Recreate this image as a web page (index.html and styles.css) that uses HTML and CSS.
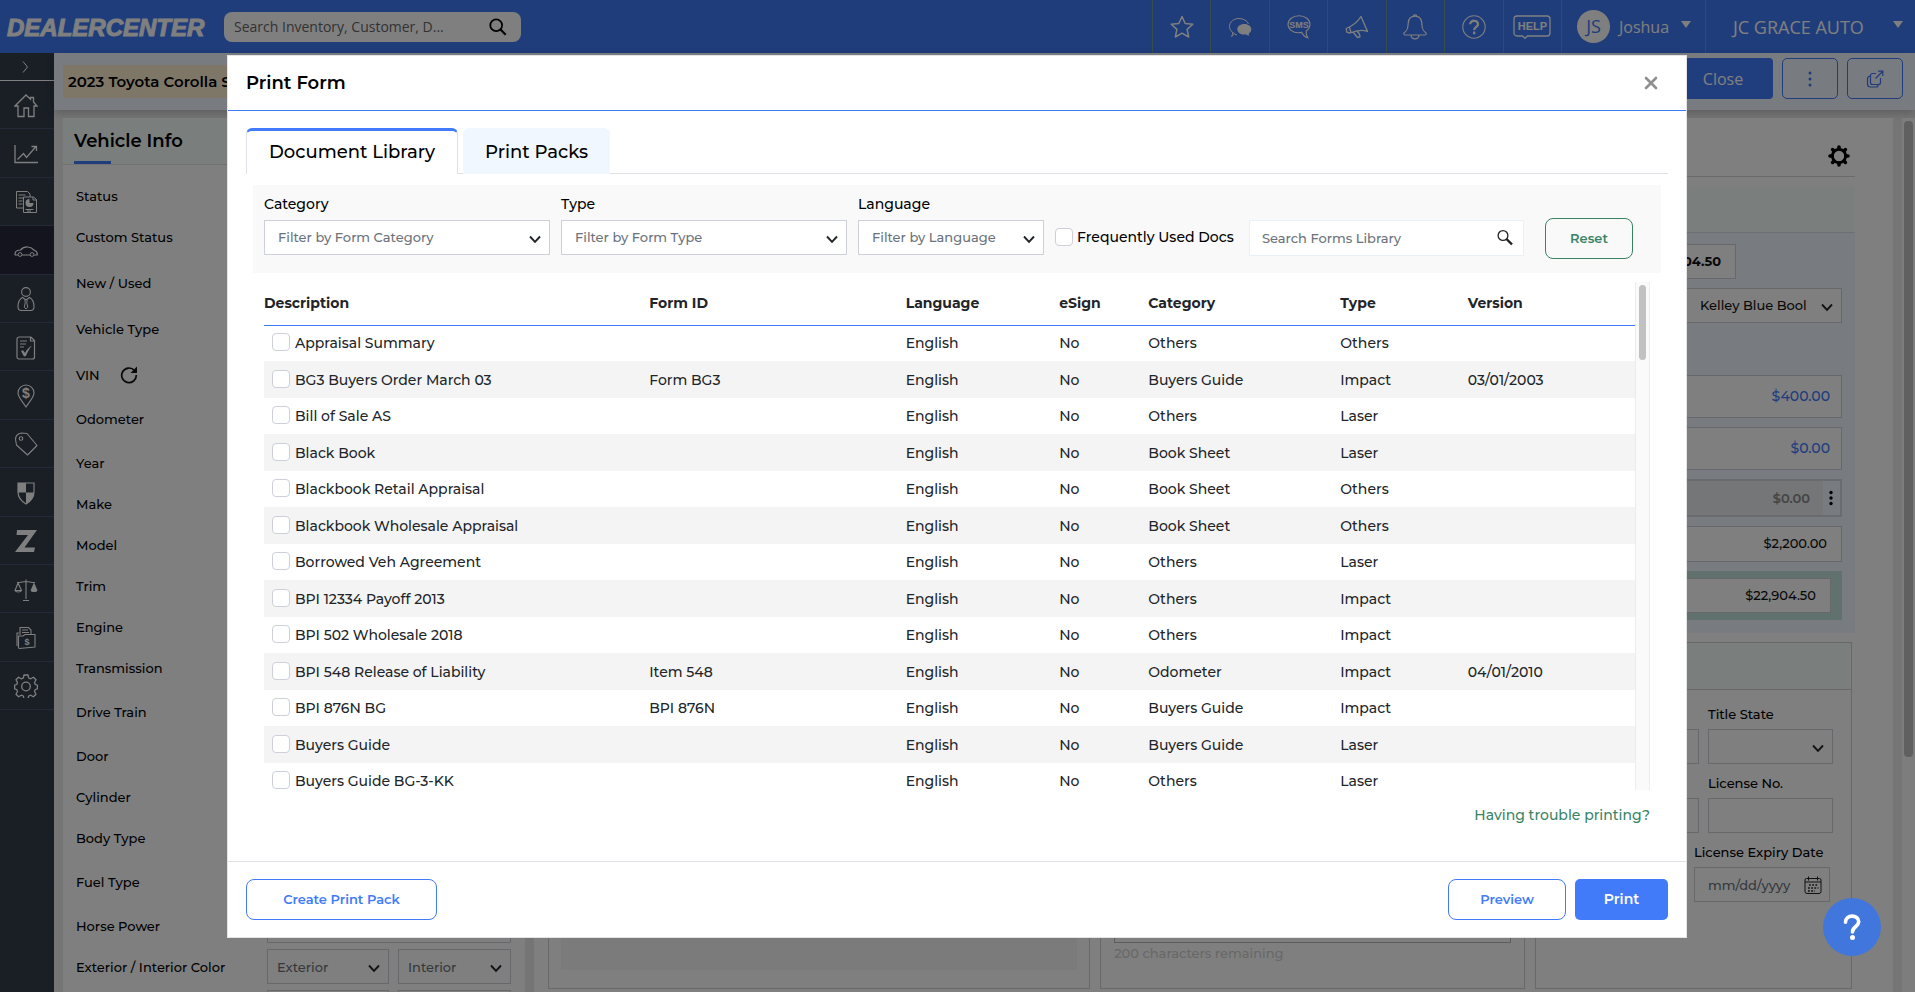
FILE: index.html
```html
<!DOCTYPE html>
<html lang="en">
<head>
<meta charset="utf-8">
<meta name="viewport" content="width=device-width, initial-scale=1">
<title>DealerCenter - Print Form</title>
<link rel="stylesheet" href="styles.css">
</head>
<body>
<svg class="sprite" aria-hidden="true">
  <symbol id="chevron" viewBox="0 0 14 14"><path d="M2 4.5 7 9.8l5-5.3" fill="none" stroke="currentColor" stroke-width="1.9"/></symbol>
</svg>

<div class="app">
  <header class="topbar">
    <div class="brand">DEALERCENTER</div>
    <div class="global-search">
      <input class="global-search-input" type="text" aria-label="Search" placeholder="Search Inventory, Customer, D...">
      <svg class="i18" viewBox="0 0 18 18"><circle cx="7.2" cy="7.2" r="5.9" fill="none" stroke="#000" stroke-width="1.8"/><path d="m11.5 11.5 5.2 5.2" stroke="#000" stroke-width="2.2"/></svg>
    </div>
    <nav class="top-actions" aria-label="Tools">
      <button class="top-action" aria-label="Favorites"><svg class="i24" viewBox="0 0 24 24"><path d="m12 1.5 3.2 7 7.6.8-5.700 5.100 1.600 7.600L12 18.200 5.300 22l1.600-7.600L1.200 9.300l7.600-.8z" fill="none" stroke="#fff" stroke-width="1.500" stroke-linejoin="round"/></svg></button>
      <button class="top-action" aria-label="Chat"><svg class="i24" viewBox="0 0 24 24"><path d="M6.500 18.500c-3-1.300-5-3.800-5-7C1.500 6.800 5.800 3.500 11 3.500c4.500 0 8.300 2.200 9.500 5.500M6.500 18.500C6 19.800 5 20.800 3.500 21.300c.8-.9 1.200-2.200 1.200-3.800M9 20l-2-.7" fill="none" stroke="#fff"/><path d="M16.300 9c-4 0-7 2.300-7 5.300s3 5.300 7 5.300c.8 0 1.500 0 2.200-.2.700.8 1.700 1.200 2.900 1.200-.5-.6-.7-1.300-.7-2.100 1.700-1 2.600-2.400 2.600-4.200 0-3-3-5.300-7-5.300z" fill="#fff"/></svg></button>
      <button class="top-action" aria-label="SMS"><svg class="i24" viewBox="0 0 24 24"><path d="M12 .8C5.800.8 1 4.500 1 9.300c0 4.800 4.500 8.500 10.500 8.500 1.300 0 2.200-.1 3.300-.4 1.400 3 3.500 4.700 6 5.400-1.500-2-2-4-1.600-6.800 2.400-1.700 3.800-3.800 3.800-6.700C23 4.500 18.200.8 12 .8z" fill="none" stroke="#fff" stroke-width="1.100"/><text x="12" y="12.500" class="glyph-sms">SMS</text></svg></button>
      <button class="top-action" aria-label="Announcements"><svg class="i24" viewBox="0 0 24 24"><path d="M16 1.500 22.500 16.500C17.500 14.500 12 15 5 18l-3.200-.8-.6-3.700C7.500 11 12.500 7 16 1.500zM8 17l4.500 5.500 2.500-.6-.6-2.900-2-2.500M4.500 12.500 6 17.500" fill="none" stroke="#fff" stroke-width="1.300" stroke-linejoin="round"/></svg></button>
      <button class="top-action" aria-label="Notifications"><svg class="i26" viewBox="0 0 26 26"><path d="M13 2.200c-4.500 0-6.500 3-6.800 7-.3 6-1.200 7.600-3.700 9.200-1.300 1-.9 2.600 1 2.600h19c1.900 0 2.300-1.600 1-2.600-2.500-1.600-3.400-3.200-3.700-9.200-.3-4-2.300-7-6.800-7zM11.200 2.400c0-2.200 3.600-2.200 3.600 0M9 21c.3 5.200 7.700 5.200 8 0" fill="none" stroke="#fff" stroke-width="1.200"/></svg></button>
      <button class="top-action" aria-label="Support"><svg class="i24" viewBox="0 0 24 24"><circle cx="12" cy="12" r="11.200" fill="none" stroke="#fff" stroke-width="1.100"/><path d="M8.200 9.300c0-4.800 7.800-4.600 7.800 0 0 2.600-3.800 2.500-3.800 5.600M12.200 16.600v2.600" fill="none" stroke="#fff" stroke-width="2.300"/></svg></button>
      <button class="top-action" aria-label="Help"><svg class="help-icon" viewBox="0 0 38 24"><path d="M4 1h30a3 3 0 0 1 3 3v14a3 3 0 0 1-3 3H14.500L12 23.300 9.500 21H4a3 3 0 0 1-3-3V4a3 3 0 0 1 3-3z" fill="none" stroke="#fff" stroke-width="1.300"/><text x="19.500" y="15" class="glyph-help">HELP</text></svg></button>
      <button class="user-menu"><span class="avatar">JS</span><span class="user-name">Joshua</span><span class="caret"></span></button>
      <button class="company-menu"><span>JC GRACE AUTO</span><span class="caret"></span></button>
    </nav>
  </header>

  <div class="shell">
    <nav class="sidebar" aria-label="Main">
      <button class="side-toggle" aria-label="Expand"><svg class="i12" viewBox="0 0 12 12"><path d="m4 .5 4.500 5.500L4 11.500" fill="none" stroke="#fff"/></svg></button>
      <div class="side-list">
        <a class="side-item" href="#" aria-label="Home"><svg class="i24" viewBox="0 0 24 24"><path d="M4 22.500V12H1L12 1l4.500 4.200V3.500h3V8l3.500 4h-3v10.500h-5.500V14H10v8.500z" fill="none" stroke="#fff" stroke-width="1.300"/></svg></a>
        <a class="side-item" href="#" aria-label="Analytics"><svg class="i24" viewBox="0 0 24 24"><path d="M1 3v17.500h23M3.500 17.500l6-6 3 4L22 4.500M17.500 4.500H22.500V9" fill="none" stroke="#fff" stroke-width="1.300"/></svg></a>
        <a class="side-item" href="#" aria-label="Reports"><svg class="i24" viewBox="0 0 24 24"><path d="M9 18H2.500V1.500h11L16 4v3M9.500 7h10l3 2.500v13h-13zM19 7v3h3.500M4.500 5h7M4.500 8h5M4.500 11h4M4.500 14h4M11.500 19.500h8M13 21h4" fill="none" stroke="#fff"/><path d="M15.500 9v4h4a4 4 0 1 1-4-4z" fill="#fff"/></svg></a>
        <a class="side-item side-item-active" href="#" aria-label="Inventory"><svg class="i24" viewBox="0 0 24 24"><path d="M4 16H1.200c-.5-2 .2-3.800 2.200-4.500L6.500 11C8.500 8.800 11 7.700 14 8c3 .2 5 1.800 6.500 3.500 2 .5 3 2 2.700 4.500H20M8 16h8" fill="none" stroke="#fff" stroke-width="1.200"/><circle cx="6" cy="15.500" r="1.900" fill="none" stroke="#fff"/><circle cx="18" cy="15.500" r="1.900" fill="none" stroke="#fff"/></svg></a>
        <a class="side-item" href="#" aria-label="Customers"><svg class="i24" viewBox="0 0 24 24"><circle cx="12" cy="5" r="4.400" fill="none" stroke="#fff" stroke-width="1.100"/><path d="M8.500 10.500C5.500 12 4 15 4 20c0 2 1.500 3.500 3.500 3.500h9c2 0 3.500-1.500 3.500-3.500 0-5-1.500-8-4.500-9.500L12 13z" fill="none" stroke="#fff" stroke-width="1.100"/><path d="m12 12 1.300 1.700-.6 1.500 1 5L12 22l-1.700-1.800 1-5-.6-1.500z" fill="none" stroke="#fff"/></svg></a>
        <a class="side-item" href="#" aria-label="Deals"><svg class="i24" viewBox="0 0 24 24"><path d="M5 1h12l3.500 3.500V21a2 2 0 0 1-2 2H5a2 2 0 0 1-2-2V3a2 2 0 0 1 2-2zM16.500 1v4h4M6 5h7M6 8h6M6 11h4" fill="none" stroke="#fff" stroke-width="1.200"/><path d="m7 15 2-.8 2 2.800c1.500-3 3.500-5.500 7-7.500-2.500 3-4.500 6.500-6 10.500l-2 .5z" fill="#fff"/></svg></a>
        <a class="side-item" href="#" aria-label="Pricing"><svg class="i24" viewBox="0 0 24 24"><path d="M12 23C9.500 18.500 4 13.500 4 9a8 8 0 0 1 16 0c0 4.500-5.500 9.500-8 14z" fill="none" stroke="#fff" stroke-width="1.100"/><text x="12" y="14" class="glyph-dollar">$</text></svg></a>
        <a class="side-item" href="#" aria-label="Tags"><svg class="i24" viewBox="0 0 24 24"><path d="M1.500 7.500C1.500 4 4 1.500 7.500 1L13 1.500 23 13.500 13.500 23 2.500 13z" fill="none" stroke="#fff" stroke-width="1.100" stroke-linejoin="round"/><circle cx="7" cy="6.500" r="1.800" fill="none" stroke="#fff" stroke-width="1.100"/></svg></a>
        <a class="side-item" href="#" aria-label="Protection"><svg class="i24" viewBox="0 0 24 24"><path d="M4 2h16v9c0 5-3 9-8 12-5-3-8-7-8-12z" fill="none" stroke="#fff" stroke-width="1.200"/><path d="M4 2h8v9.500H4zM12 11.500h8c-.2 4.500-3 8.500-8 11.500z" fill="#fff"/></svg></a>
        <a class="side-item" href="#" aria-label="Z"><svg class="i24" viewBox="0 0 24 24"><path d="M3 1h20L10.500 18.500H21L20 23H1L14 6H2.500z" fill="#fff"/></svg></a>
        <a class="side-item" href="#" aria-label="Compliance"><svg class="i24" viewBox="0 0 24 24"><path d="M12 1.500V21M9 22.500h6M3 4.500c4 0 6-1 9-1s5 1 9 1M4 5 1 12.500h6.500zM1 12.500c1 2 5.500 2 6.500 0" fill="none" stroke="#fff" stroke-width="1.100"/><path d="m20 4.500-3.500 8c1 2 6 2 7 0z" fill="#fff"/></svg></a>
        <a class="side-item" href="#" aria-label="Accounting"><svg class="i24" viewBox="0 0 24 24"><path d="M4.500 22.500V10H9l2-1.500h10V21l-16 1.500M3 20V7h2M6 9V1.500h8.500L17 4v4.500M8 4h6M8 6.500h7" fill="none" stroke="#fff" stroke-width="1.100"/><text x="13" y="19" class="glyph-dollar-sm">$</text></svg></a>
        <a class="side-item" href="#" aria-label="Settings"><svg class="i24" viewBox="0 0 24 24"><path d="M10 1h4l.7 3 2 .8 2.700-1.600 2.600 2.600-1.500 2.700.8 2 2.100.7v3.600l-2.100.7-.8 2 1.500 2.700-2.600 2.600-2.700-1.600-2 .8-.7 3h-4l-.7-3-2-.8-2.700 1.600L2 20.200l1.500-2.700-.8-2L.600 14.800v-3.600l2.100-.7.800-2L2 5.800l2.600-2.600 2.700 1.600 2-.8z" fill="none" stroke="#fff" stroke-width="1.300" stroke-linejoin="round"/><circle cx="12" cy="12.500" r="4.300" fill="none" stroke="#fff" stroke-width="1.300"/></svg></a>
      </div>
    </nav>

    <main class="main">
      <div class="vehicle-bar">
        <div class="vehicle-title">2023 Toyota Corolla SE</div>
        <button class="btn-close">Close</button>
        <button class="btn-icon" aria-label="More"><svg class="i18" viewBox="0 0 18 18"><g fill="#4079f8"><circle cx="9" cy="3" r="1.500"/><circle cx="9" cy="9" r="1.500"/><circle cx="9" cy="15" r="1.500"/></g></svg></button>
        <button class="btn-icon" aria-label="Open in new window"><svg class="i18" viewBox="0 0 18 18"><path d="M10 3.500H6.500A2 2 0 0 0 4.500 5.500v7a2 2 0 0 0 2 2h6a2 2 0 0 0 2-2V8M12 1.200h4.800V6M16.500 1.500 9.500 8.500M4.500 6.200H4A2.500 2.500 0 0 0 1.500 8.700V14a3 3 0 0 0 3 3H10a2 2 0 0 0 2-2v-.5" fill="none" stroke="#4079f8" stroke-width="1.200"/></svg></button>
      </div>

      <div class="workspace">
        <section class="info-panel">
          <h2 class="info-title"><span>Vehicle Info</span></h2>
          <div class="info-rows">
            <div class="info-row"><label for="f1">Status</label><input id="f1" class="field" type="text"></div>
            <div class="info-row row-tall"><label for="f2">Custom Status</label><input id="f2" class="field" type="text"></div>
            <div class="info-row row-tall"><label for="f3">New / Used</label><input id="f3" class="field" type="text"></div>
            <div class="info-row row-tall"><label for="f4">Vehicle Type</label><input id="f4" class="field" type="text"></div>
            <div class="info-row row-mid"><label for="f5" class="vin-label">VIN <svg class="i18" viewBox="0 0 18 18"><path d="M14.500 4.500A7.300 7.300 0 1 0 16.300 9" fill="none" stroke="#111" stroke-width="1.700"/><path d="M17 .5V7h-6.500z" fill="#111"/></svg></label><input id="f5" class="field" type="text"></div>
            <div class="info-row row-mid"><label for="f6">Odometer</label><input id="f6" class="field" type="text"></div>
            <div class="info-row"><label for="f7">Year</label><input id="f7" class="field" type="text"></div>
            <div class="info-row"><label for="f8">Make</label><input id="f8" class="field" type="text"></div>
            <div class="info-row"><label for="f9">Model</label><input id="f9" class="field" type="text"></div>
            <div class="info-row"><label for="f10">Trim</label><input id="f10" class="field" type="text"></div>
            <div class="info-row"><label for="f11">Engine</label><input id="f11" class="field" type="text"></div>
            <div class="info-row row-mid"><label for="f12">Transmission</label><input id="f12" class="field" type="text"></div>
            <div class="info-row row-mid"><label for="f13">Drive Train</label><input id="f13" class="field" type="text"></div>
            <div class="info-row"><label for="f14">Door</label><input id="f14" class="field" type="text"></div>
            <div class="info-row"><label for="f15">Cylinder</label><input id="f15" class="field" type="text"></div>
            <div class="info-row row-mid"><label for="f16">Body Type</label><input id="f16" class="field" type="text"></div>
            <div class="info-row row-mid"><label for="f17">Fuel Type</label><input id="f17" class="field" type="text"></div>
            <div class="info-row"><label for="f18">Horse Power</label><input id="f18" class="field" type="text"></div>
            <div class="info-row"><label for="f19">Exterior / Interior Color</label>
              <div class="pair">
                <div class="select"><select id="f19"><option>Exterior</option></select><svg class="chev"><use href="#chevron"/></svg></div>
                <div class="select"><select aria-label="Interior Color"><option>Interior</option></select><svg class="chev"><use href="#chevron"/></svg></div>
              </div>
            </div>
            <div class="info-row"><span></span><div class="pair"><input class="field" type="text" aria-label="Exterior color name"><input class="field" type="text" aria-label="Interior color name"></div></div>
          </div>
        </section>

        <section class="detail-panel">
          <div class="detail-head"><button class="gear" aria-label="Panel settings"><svg class="i22" viewBox="0 0 22 22"><circle cx="11" cy="11" r="6.600" fill="none" stroke="#000" stroke-width="2.800"/><path d="M11 2v2M11 18v2M2 11h2M18 11h2M4.600 4.600l1.400 1.400M16 16l1.400 1.400M17.400 4.600 16 6M6 16l-1.400 1.400" stroke="#000" stroke-width="3.600" stroke-linecap="round"/></svg></button></div>
          <div class="price-card">
            <div class="price-head"></div>
            <div class="price-body">
              <input class="price price-short" type="text" aria-label="Asking price" value="$22,904.50">
              <div class="select price-select"><select aria-label="Book"><option>Kelley Blue Bool</option></select><svg class="chev"><use href="#chevron"/></svg></div>
              <input class="price price-link" type="text" aria-label="Additional cost" value="$400.00">
              <input class="price price-link" type="text" aria-label="Pack" value="$0.00">
              <div class="price-locked"><span>$0.00</span><button class="more" aria-label="Cost options"><svg class="i16" viewBox="0 0 16 16"><circle cx="7" cy="2.500" r="1.700"/><circle cx="7" cy="8" r="1.700"/><circle cx="7" cy="13.500" r="1.700"/></svg></button></div>
              <input class="price price-plain" type="text" aria-label="Adjustment" value="$2,200.00">
              <div class="total-band"><input class="price" type="text" aria-label="Total" value="$22,904.50"></div>
            </div>
          </div>
          <div class="cards">
            <section class="card card-photo"><div class="photo-area"></div></section>
            <section class="card card-notes"><textarea class="notes" aria-label="Notes"></textarea><p class="hint">200 characters remaining</p></section>
            <section class="card card-title">
              <div class="card-head"></div>
              <div class="title-grid">
                <div class="fg"><label for="tn">Title No.</label><input id="tn" class="field" type="text"></div>
                <div class="fg"><label for="ts">Title State</label><div class="select"><select id="ts"><option></option></select><svg class="chev"><use href="#chevron"/></svg></div></div>
                <div class="fg"><label for="ti">Title In</label><input id="ti" class="field" type="text"></div>
                <div class="fg"><label for="ln">License No.</label><input id="ln" class="field" type="text"></div>
              </div>
              <div class="expiry fg"><label for="le">License Expiry Date</label>
                <div class="date"><input id="le" type="text" placeholder="mm/dd/yyyy"><svg class="i18" viewBox="0 0 18 18"><path d="M2.500 2.500h13A1.500 1.500 0 0 1 17 4v11.500a2 2 0 0 1-2 2H3a2 2 0 0 1-2-2V4a1.500 1.500 0 0 1 1.500-1.500zM1 6h16M4.500.5v4M13.500.5v4" fill="none" stroke="#222"/><path d="M5 9h9.500M4 12h10.500M4 15h7" stroke="#222" stroke-width="1.400" stroke-dasharray="1.800 1.400"/></svg></div>
              </div>
            </section>
          </div>
        </section>
        <div class="page-scroll"><div class="page-thumb"></div></div>
      </div>
    </main>
  </div>
</div>

<div class="backdrop">
  <div class="modal" role="dialog" aria-labelledby="modal-title">
    <header class="modal-head">
      <h1 id="modal-title">Print Form</h1>
      <button class="modal-x" aria-label="Dismiss"><svg class="i14" viewBox="0 0 14 14"><path d="m2 2 10 10M12 2 2 12" stroke="#8f8f8f" stroke-width="2.600" stroke-linecap="round"/></svg></button>
    </header>
    <div class="modal-body">
      <div class="tabs" role="tablist">
        <button class="tab tab-active" role="tab" aria-selected="true">Document Library</button>
        <button class="tab" role="tab" aria-selected="false">Print Packs</button>
      </div>

      <div class="filters">
        <div class="filter filter-wide"><label for="fc">Category</label><div class="select"><select id="fc"><option>Filter by Form Category</option></select><svg class="chev"><use href="#chevron"/></svg></div></div>
        <div class="filter filter-wide"><label for="ft">Type</label><div class="select"><select id="ft"><option>Filter by Form Type</option></select><svg class="chev"><use href="#chevron"/></svg></div></div>
        <div class="filter filter-lang"><label for="fl">Language</label><div class="select"><select id="fl"><option>Filter by Language</option></select><svg class="chev"><use href="#chevron"/></svg></div></div>
        <label class="frequent"><input class="check" type="checkbox">Frequently Used Docs</label>
        <div class="form-search"><input type="text" aria-label="Search forms" placeholder="Search Forms Library"><svg class="i18" viewBox="0 0 18 18"><circle cx="7" cy="6.500" r="4.900" fill="none" stroke="#222" stroke-width="1.300"/><path d="m10.500 10 5.500 5.500" stroke="#222" stroke-width="2.400"/></svg></div>
        <button class="btn btn-reset">Reset</button>
      </div>

      <div class="list">
        <div class="list-view">
          <table class="forms">
            <thead><tr><th class="c-desc">Description</th><th class="c-id">Form ID</th><th class="c-lang">Language</th><th class="c-esign">eSign</th><th class="c-cat">Category</th><th class="c-type">Type</th><th class="c-ver">Version</th></tr></thead>
            <tbody>
              <tr><td><label><input class="check" type="checkbox">Appraisal Summary</label></td><td></td><td>English</td><td>No</td><td>Others</td><td>Others</td><td></td></tr>
              <tr><td><label><input class="check" type="checkbox">BG3 Buyers Order March 03</label></td><td>Form BG3</td><td>English</td><td>No</td><td>Buyers Guide</td><td>Impact</td><td>03/01/2003</td></tr>
              <tr><td><label><input class="check" type="checkbox">Bill of Sale AS</label></td><td></td><td>English</td><td>No</td><td>Others</td><td>Laser</td><td></td></tr>
              <tr><td><label><input class="check" type="checkbox">Black Book</label></td><td></td><td>English</td><td>No</td><td>Book Sheet</td><td>Laser</td><td></td></tr>
              <tr><td><label><input class="check" type="checkbox">Blackbook Retail Appraisal</label></td><td></td><td>English</td><td>No</td><td>Book Sheet</td><td>Others</td><td></td></tr>
              <tr><td><label><input class="check" type="checkbox">Blackbook Wholesale Appraisal</label></td><td></td><td>English</td><td>No</td><td>Book Sheet</td><td>Others</td><td></td></tr>
              <tr><td><label><input class="check" type="checkbox">Borrowed Veh Agreement</label></td><td></td><td>English</td><td>No</td><td>Others</td><td>Laser</td><td></td></tr>
              <tr><td><label><input class="check" type="checkbox">BPI 12334 Payoff 2013</label></td><td></td><td>English</td><td>No</td><td>Others</td><td>Impact</td><td></td></tr>
              <tr><td><label><input class="check" type="checkbox">BPI 502 Wholesale 2018</label></td><td></td><td>English</td><td>No</td><td>Others</td><td>Impact</td><td></td></tr>
              <tr><td><label><input class="check" type="checkbox">BPI 548 Release of Liability</label></td><td>Item 548</td><td>English</td><td>No</td><td>Odometer</td><td>Impact</td><td>04/01/2010</td></tr>
              <tr><td><label><input class="check" type="checkbox">BPI 876N BG</label></td><td>BPI 876N</td><td>English</td><td>No</td><td>Buyers Guide</td><td>Impact</td><td></td></tr>
              <tr><td><label><input class="check" type="checkbox">Buyers Guide</label></td><td></td><td>English</td><td>No</td><td>Buyers Guide</td><td>Laser</td><td></td></tr>
              <tr><td><label><input class="check" type="checkbox">Buyers Guide BG-3-KK</label></td><td></td><td>English</td><td>No</td><td>Others</td><td>Laser</td><td></td></tr>
            </tbody>
          </table>
        </div>
        <div class="list-scroll"><div class="list-thumb"></div></div>
      </div>
      <a class="trouble" href="#">Having trouble printing?</a>
    </div>
    <footer class="modal-foot">
      <button class="btn btn-outline btn-create">Create Print Pack</button>
      <button class="btn btn-outline">Preview</button>
      <button class="btn btn-solid">Print</button>
    </footer>
  </div>
</div>

<button class="fab" aria-label="Help center"><svg class="i30" viewBox="0 0 30 30"><path d="M8.500 10.300C8.500 2 21.700 2.200 21.700 9.800c0 4.700-6.200 4.800-6.200 10.200" fill="none" stroke="#fff" stroke-width="3.600" stroke-linecap="round"/><circle cx="15.500" cy="25.500" r="2.500" fill="#fff"/></svg></button>
</body>
</html>
```
FILE: styles.css
```css
* { box-sizing: border-box; }

:root {
  --ui: Montserrat, Inter, "Liberation Sans", sans-serif;
  --sys: "Open Sans", "Noto Sans", sans-serif;
  --blue: #417bfa;
  --green: #3a8466;
  --line: #cdd0d8;
}

body {
  margin: 0;
  font-family: var(--ui);
  font-size: 13px;
  font-weight: 500;
  color: #000;
  background: #fff;
}

button, input, select, textarea { font: inherit; color: inherit; }
button { padding: 0; border: 0; background: none; cursor: pointer; }
h1, h2, p { margin: 0; }
svg { display: block; flex: none; }

.sprite { width: 0; height: 0; position: absolute; }
.i12 { width: 12px; height: 12px; }
.i14 { width: 14px; height: 14px; }
.i16 { width: 16px; height: 16px; }
.i18 { width: 18px; height: 18px; }
.i22 { width: 22px; height: 22px; }
.i24 { width: 24px; height: 24px; }
.i26 { width: 26px; height: 26px; }
.i30 { width: 30px; height: 30px; }

.app { display: flex; flex-direction: column; height: 100vh; overflow: hidden; }

/* Top bar */
.topbar {
  display: flex;
  align-items: center;
  flex: none;
  height: 53px;
  padding-left: 7px;
  background: #407af6;
  color: #fff;
}
.brand {
  width: 217px;
  padding-top: 3px;
  font: italic bold 24px/28px "Liberation Sans", sans-serif;
  -webkit-text-stroke: 1px #fff;
}
.global-search {
  display: flex;
  align-items: center;
  width: 297px;
  height: 30px;
  padding: 0 14px 0 10px;
  border-radius: 8px;
  background: #fff;
}
.global-search-input {
  flex: 1;
  min-width: 0;
  padding: 0;
  border: 0;
  outline: 0;
  background: none;
  font-family: var(--sys);
  font-size: 14px;
  font-weight: 400;
}
.global-search-input::placeholder { color: #666; opacity: 1; }
.top-actions {
  display: grid;
  grid-template-columns: repeat(7, 1fr) 144px 210px;
  align-self: stretch;
  width: 763px;
  margin-left: auto;
}
.top-action, .user-menu, .company-menu {
  display: flex;
  align-items: center;
  border-left: 1px solid #6f9c96;
  color: #fff;
  font-family: var(--sys);
  font-weight: 400;
}
.top-action { justify-content: center; }
.help-icon { width: 38px; height: 24px; }
.glyph-sms { font: bold 9px "Liberation Sans", sans-serif; text-anchor: middle; fill: #fff; }
.glyph-help { font: bold 11px "Liberation Sans", sans-serif; text-anchor: middle; fill: #fff; }
.glyph-dollar { font: bold 14px "Liberation Sans", sans-serif; text-anchor: middle; fill: #fff; }
.glyph-dollar-sm { font: bold 9px "Liberation Sans", sans-serif; text-anchor: middle; fill: #fff; }
.user-menu { padding-left: 15px; font-size: 16px; }
.avatar {
  width: 33px;
  height: 33px;
  border-radius: 50%;
  background: #fff;
  color: #407af6;
  font-size: 18px;
  line-height: 33px;
  text-align: center;
}
.user-name { margin: 0 12px 0 9px; }
.caret {
  margin-bottom: 4px;
  border: 5px solid transparent;
  border-top: 7px solid #fff;
  border-bottom: 0;
}
.company-menu { padding: 0 12px 0 27px; justify-content: space-between; font-size: 18px; }

/* Sidebar */
.shell { display: flex; flex: 1; min-height: 0; }
.sidebar { flex: none; width: 54px; background: #323e4b; }
.side-toggle {
  display: flex;
  align-items: center;
  justify-content: center;
  width: 100%;
  height: 28px;
  padding-right: 4px;
  border-bottom: 1px solid #fff;
}
.side-list { display: flex; flex-direction: column; height: 629px; }
.side-item {
  display: flex;
  flex: 1;
  align-items: center;
  justify-content: center;
  padding: 2px 2px 0 0;
  border-bottom: 1px solid #46546e;
}
.side-item-active { background: #28283c; }

/* Vehicle bar */
.main { display: flex; flex: 1; flex-direction: column; min-width: 0; background: #eaeaea; }
.vehicle-bar {
  display: flex;
  flex: none;
  align-items: flex-start;
  gap: 9px;
  height: 57px;
  padding: 5px 12px 0 9px;
  background: #f0f7ff;
  box-shadow: 0 3px 8px rgba(0, 0, 0, .2);
}
.vehicle-title {
  flex: 0 1 400px;
  margin: 7px auto 0 0;
  padding-left: 5px;
  background: #fcefd1;
  font-size: 15px;
  font-weight: 600;
  line-height: 33px;
}
.btn-close {
  width: 100px;
  height: 41px;
  border-radius: 4px;
  background: var(--blue);
  color: #fff;
  font-family: var(--sys);
  font-size: 16px;
}
.btn-icon {
  display: flex;
  align-items: center;
  justify-content: center;
  width: 56px;
  height: 41px;
  border: 1px solid var(--blue);
  border-radius: 5px;
}

/* Workspace */
.workspace { display: flex; flex: 1; gap: 9px; min-height: 0; padding: 8px 0 0 9px; }
.info-panel { flex: none; width: 462px; background: #fff; }
.info-title {
  height: 47px;
  padding-left: 11px;
  border-bottom: 1px solid #e4e4e4;
  background: #f4fcfa;
  font-size: 18px;
  font-weight: 600;
  line-height: 46px;
}
.info-title span {
  display: block;
  background: linear-gradient(var(--blue), var(--blue)) 0 100% / 37px 3px no-repeat;
}
.info-rows { padding: 13px 14px 0 13px; }
.info-row {
  display: grid;
  grid-template-columns: 191px 1fr;
  align-items: center;
  align-content: start;
  height: 41px;
}
.row-mid { height: 44px; }
.row-tall { height: 46px; }
.vin-label { display: flex; align-items: center; gap: 20px; }
.pair { display: grid; grid-template-columns: 122px 1fr; gap: 9px; }

.field, .select select {
  width: 100%;
  height: 35px;
  border: 1px solid var(--line);
  border-radius: 0;
  background: #fff;
}
.select { display: grid; align-items: center; }
.select > * { grid-area: 1 / 1; }
.select select { appearance: none; padding: 0 13px; color: #6b727b; }
.pair .select select { padding: 0 9px; }
.select .chev {
  justify-self: end;
  width: 14px;
  height: 14px;
  margin: 2px 8px 0 0;
  color: #212529;
  pointer-events: none;
}

.detail-panel { flex: 1; min-width: 0; padding: 0 38px 4px 14px; background: #fff; }
.detail-head {
  display: flex;
  align-items: center;
  justify-content: flex-end;
  height: 59px;
  padding: 17px 5px 0 0;
  border-bottom: 1px solid #d6d6d6;
}
.price-card { width: 620px; margin: 9px 0 0 auto; }
.price-head { height: 47px; border-bottom: 1px solid #d8e0e4; background: #f4fcf8; }
.price-body {
  display: flex;
  flex-direction: column;
  align-items: flex-end;
  gap: 9px;
  padding: 11px 13px 13px;
  background: #f0f7ff;
}
.price {
  width: 420px;
  height: 35px;
  padding: 0 14px 2px;
  border: 1px solid var(--line);
  background: #fff;
  text-align: right;
  color: #111;
}
.price-short { width: 200px; margin-right: 106px; font-weight: 700; }
.price-select { width: 160px; }
.price-select select { padding: 0 17px 2px; color: #111; }
.price-link { height: 43px; padding: 0 11px 2px; color: var(--blue); font-size: 14px; }
.price-select + .price-link { margin-top: 43px; }
.price-locked {
  display: flex;
  align-items: center;
  justify-content: flex-end;
  gap: 13px;
  width: 420px;
  height: 38px;
  border: 2px solid #d4d7dd;
  background: #e9ecef;
  color: #888;
  font-weight: 600;
}
.more { display: grid; place-items: center; align-self: stretch; width: 17px; background: #f0f7ff; }
.price-plain { height: 36px; }
.total-band { padding: 7px 11px; background: #c2e2dc; }

.cards {
  display: grid;
  grid-template-columns: 543fr 426fr 317fr;
  gap: 10px;
  height: 347px;
  margin-top: 9px;
  padding-right: 3px;
}
.card { min-width: 0; border: 1px solid #d0d0d0; }
.card-photo { padding: 12px 12px 18px; }
.photo-area { height: 100%; background: #f6f6f6; }
.card-notes { display: flex; flex-direction: column; padding: 12px 13px 25px; }
.notes { flex: 1; resize: none; border: 1px solid #bbb; }
.hint { color: #d0d0d0; line-height: 20px; }
.card-head { height: 47px; border-bottom: 1px solid #d0d0d0; background: #f4fcfa; }
.title-grid { display: grid; grid-template-columns: 150px 125px; gap: 9px; justify-content: end; padding: 14px 18px 0; }
.fg label { display: block; line-height: 20px; margin-bottom: 5px; }
.expiry { width: 136px; margin: 9px 21px 0 auto; }
.expiry label { white-space: nowrap; }
.date { display: flex; align-items: center; height: 35px; padding: 0 7px 0 13px; border: 1px solid var(--line); }
.date input { width: 100%; min-width: 0; padding: 0; border: 0; background: none; }
.date input::placeholder { color: #6b727b; opacity: 1; }

.page-scroll { flex: none; width: 13px; padding: 3px 2px 0; background: #fafafa; }
.page-thumb { height: 636px; border-radius: 4px; background: #c1c1c1; }

/* Modal */
.backdrop {
  position: fixed;
  inset: 0;
  display: flex;
  padding: 55px 228px 54px 227px;
  background: rgba(0, 0, 0, .5);
}
.modal {
  display: flex;
  flex: 1;
  flex-direction: column;
  min-width: 0;
  border: 1px solid #e4e4e4;
  background: #fff;
}
.modal-head {
  display: flex;
  align-items: center;
  justify-content: space-between;
  height: 55px;
  padding: 0 28px 0 18px;
  border-bottom: 1px solid var(--blue);
}
.modal-head h1 { font-size: 18px; font-weight: 600; }
.modal-body { display: flex; flex: 1; flex-direction: column; min-height: 0; padding: 17px 18px 0; font-size: 14px; }

.tabs { display: flex; gap: 5px; border-bottom: 1px solid #dee2e6; }
.tab {
  height: 46px;
  margin-bottom: -1px;
  padding: 1px 22px 0;
  border-radius: 6px 6px 0 0;
  background: #f0f7ff;
  font-size: 18px;
}
.tab-active {
  padding: 0 22px 2px;
  border: 1px solid #dee2e6;
  border-top: 3px solid var(--blue);
  border-bottom: 0;
  background: #fff;
}

.filters {
  display: flex;
  align-items: flex-end;
  margin: 11px 7px 0;
  padding: 9px 28px 14px 11px;
  background: #f9f9f9;
}
.filter { margin: 0 11px 4px 0; }
.filter-wide { flex: 0 1 286px; }
.filter-lang { flex: 0 1 186px; }
.filter label { display: block; margin-bottom: 6px; line-height: 20px; }
.filter .select { font-size: 13px; }
.filter .select select { padding-bottom: 1px; }
.frequent { display: flex; align-items: center; gap: 4px; margin-bottom: 12px; line-height: 20px; white-space: nowrap; }
.check {
  appearance: none;
  flex: none;
  width: 18px;
  height: 18px;
  margin: 0;
  border: 1px solid var(--line);
  border-radius: 4px;
  background: #fff;
}
.form-search {
  display: flex;
  flex: 1;
  align-items: center;
  max-width: 275px;
  height: 36px;
  margin: 0 21px 3px auto;
  padding: 0 9px 0 12px;
  border: 1px solid #e8f1fa;
  background: #fff;
  font-size: 13px;
}
.form-search input { flex: 1; min-width: 0; padding: 0; border: 0; background: none; }
.form-search input::placeholder { color: #6b727b; opacity: 1; }

.btn { height: 41px; padding-bottom: 2px; border-radius: 8px; font-size: 13px; font-weight: 600; }
.btn-reset { width: 88px; border: 1px solid var(--green); color: var(--green); }
.btn-outline { width: 118px; border: 1px solid var(--blue); color: var(--blue); }
.btn-outline.btn-create { width: 191px; margin-right: auto; }
.btn-solid { width: 93px; border-radius: 5px; background: var(--blue); color: #fff; font-size: 14px; }

.list { display: flex; height: 508px; margin: 9px 18px 0; }
.list-view { flex: 1; overflow: hidden; }
.forms { width: 100%; border-collapse: collapse; table-layout: fixed; color: #212529; }
.forms th {
  height: 43px;
  padding: 0;
  border-bottom: 1px solid var(--blue);
  font-weight: 700;
  text-align: left;
}
.forms td { height: 36px; padding: 0; white-space: nowrap; }
.forms tbody tr:nth-child(even) td { height: 37px; background: #f4f4f4; }
.forms label { display: flex; align-items: center; gap: 5px; padding-left: 8px; }
.forms .check { margin-bottom: 2px; }
.c-desc { width: 28.1%; }
.c-id { width: 18.7%; }
.c-lang { width: 11.2%; }
.c-esign { width: 6.5%; }
.c-cat { width: 14%; }
.c-type { width: 9.3%; }
.c-ver { width: 12.2%; }
.list-scroll { width: 15px; padding: 3px 3px 0; border: solid #ececec; border-width: 0 1px; background: #fafafa; }
.list-thumb { height: 75px; border-radius: 4px; background: #c1c1c1; }

.trouble { align-self: flex-end; margin: 15px 18px 0 0; color: var(--green); line-height: 20px; text-decoration: none; }

.modal-foot { display: flex; gap: 9px; padding: 17px 18px; border-top: 1px solid #dee2e6; }

.fab {
  position: fixed;
  right: 34px;
  bottom: 36px;
  display: grid;
  place-items: center;
  width: 58px;
  height: 58px;
  border-radius: 50%;
  background: #4177dc;
}
```
